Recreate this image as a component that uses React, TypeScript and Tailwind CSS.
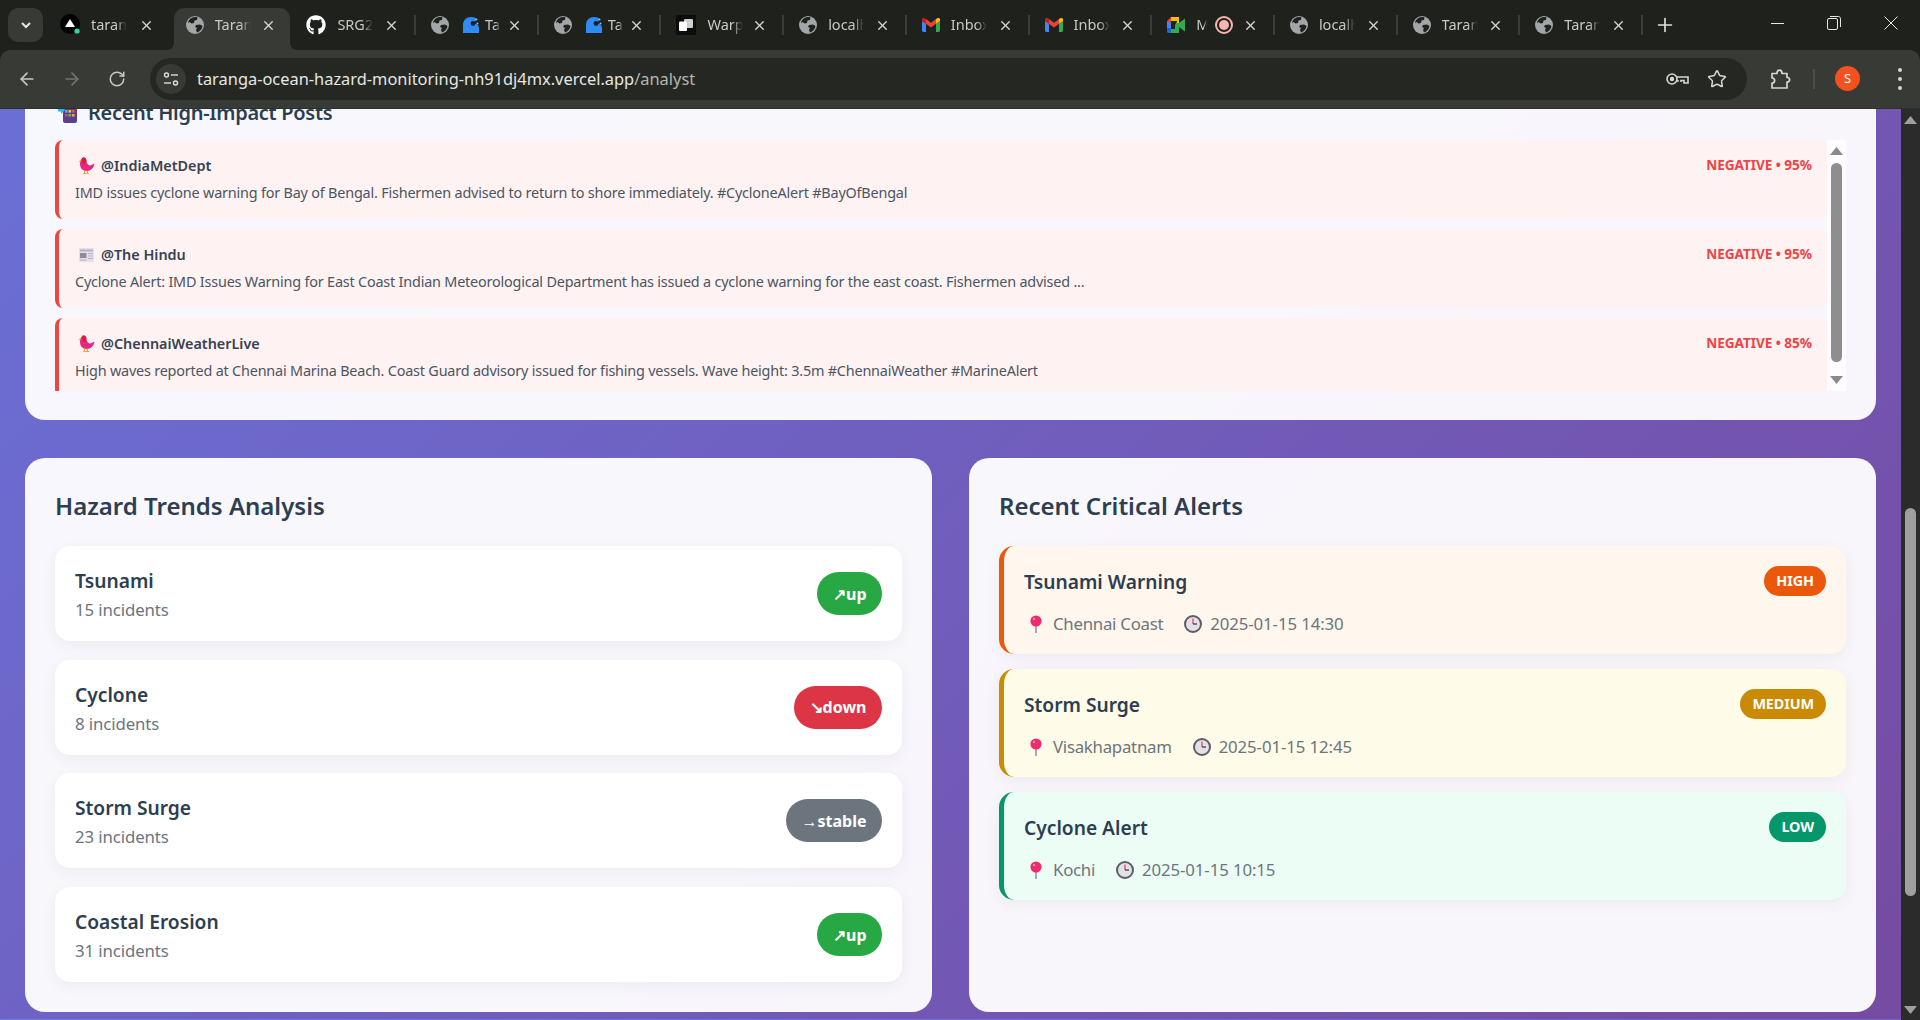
import React from "react";
import { ArrowLeft, ArrowRight, RotateCw, Star, X, Plus } from "lucide-react";
import { FaGithub } from "react-icons/fa";

const Globe = () => (
  <svg width="18" height="18" viewBox="0 0 18 18" className="shrink-0">
    <circle cx="9" cy="9" r="9" fill="#a3a6a8" />
    <path
      d="M5 2.2 C7 1 10 .8 11.5 1.5 L11 4 L8.5 4.5 L8 7 L5.5 7.5 L3.5 6 L2 7 C2.2 5 3.4 3.2 5 2.2Z M10 9 L14 8.5 L16.5 10 C16 13 14 15.5 11 16.5 L10 14 L11 12 L9 11Z"
      fill="#1e211c"
    />
  </svg>
);

const VercelIcon = () => (
  <svg width="20" height="22" viewBox="0 0 20 22" className="shrink-0">
    <circle cx="10" cy="10" r="10" fill="#000" />
    <path d="M10 5 L15 13 L5 13Z" fill="#fff" />
    <circle cx="17" cy="17" r="2.6" fill="#2dd4a8" />
  </svg>
);

const CatIcon = () => (
  <svg width="16" height="16" viewBox="0 0 16 16" className="shrink-0">
    <path d="M0 16 L0 8 C0 3 3.5 0 8 0 C10.5 0 12.5 .8 14 2 L11 6 L15 8 L16 11 V16Z" fill="#2f8bf5" />
    <circle cx="10" cy="6.5" r="2.4" fill="#13202c" />
    <circle cx="13.5" cy="2.5" r="1" fill="#7cc0ff" />
    <circle cx="14.5" cy="6.5" r="1" fill="#7cc0ff" />
  </svg>
);

const WarpIcon = () => (
  <span className="flex h-5 w-5 shrink-0 items-center justify-center bg-[#0c0c0c]">
    <svg width="14" height="12" viewBox="0 0 14 12">
      <rect x="5" y="0" width="9" height="9" rx="1" fill="#cfcfcf" />
      <rect x="0" y="2.5" width="8" height="9.5" rx="1" fill="#fff" />
    </svg>
  </span>
);

const GmailIcon = () => (
  <svg width="18" height="14" viewBox="0 0 18 14" className="shrink-0">
    <path d="M0 3 L0 12.6 C0 13.4 .6 14 1.4 14 L4 14 L4 5.5Z" fill="#4285f4" />
    <path d="M14 5.5 L14 14 L16.6 14 C17.4 14 18 13.4 18 12.6 L18 3Z" fill="#34a853" />
    <path d="M14 1 L14 5.8 L18 3 L18 1.6 C18 .2 16.4 -.6 15.3 .2Z" fill="#fbbc04" />
    <path d="M4 5.8 L4 1 L9 4.7 L14 1 L14 5.8 L9 9.5Z" fill="#ea4335" />
    <path d="M0 1.6 L0 3 L4 5.8 L4 1 L2.7 .2 C1.6 -.6 0 .2 0 1.6Z" fill="#c5221f" />
  </svg>
);

const MeetIcon = () => (
  <svg width="18" height="16" viewBox="0 0 18 16" className="shrink-0">
    <path d="M4 0 L12 0 L12 4 L4 4Z" fill="#fbbc04" />
    <path d="M0 4 L4 0 L4 5 L0 5Z" fill="#ea4335" />
    <path d="M0 5 L4 5 L4 11 L0 11Z" fill="#4285f4" />
    <path d="M0 11 L4 11 L4 16 L1.5 16 C.6 16 0 15.4 0 14.5Z" fill="#1967d2" />
    <path d="M4 12 L12 12 L12 16 L4 16Z" fill="#34a853" />
    <path d="M10 4 L12 4 L12 12 L8 12 L8 8Z" fill="#34a853" />
    <path d="M12 6 L18 1.5 L18 14.5 L12 10Z" fill="#34a853" />
    <path d="M10 0 L12 0 L12 6 L10 6Z" fill="#fbbc04" />
  </svg>
);

const RecIcon = () => (
  <span className="flex h-[18px] w-[18px] shrink-0 items-center justify-center rounded-full border-2 border-[#f7b5ad]">
    <span className="h-2.5 w-2.5 rounded-full bg-[#f7b5ad]" />
  </span>
);

type TabInfo = {
  icons: React.ReactNode[];
  title: string;
  titleWidth: number;
  active?: boolean;
  noSep?: boolean;
  narrow?: boolean;
  pad?: string;
};

const tabs: TabInfo[] = [
  { icons: [<VercelIcon key="a" />], title: "tarang", titleWidth: 36, noSep: true, pad: "pl-[12px]" },
  { icons: [<Globe key="a" />], title: "Tarang", titleWidth: 36, active: true, noSep: true },
  { icons: [<FaGithub key="a" size={20} color="#fff" className="shrink-0" />], title: "SRG2", titleWidth: 36, pad: "pl-[13px]" },
  { icons: [<Globe key="a" />, <CatIcon key="b" />], title: "Ta", titleWidth: 15, narrow: true },
  { icons: [<Globe key="a" />, <CatIcon key="b" />], title: "Ta", titleWidth: 15, narrow: true },
  { icons: [<WarpIcon key="a" />], title: "Warp", titleWidth: 36 },
  { icons: [<Globe key="a" />], title: "localh", titleWidth: 36 },
  { icons: [<GmailIcon key="a" />], title: "Inbox", titleWidth: 36 },
  { icons: [<GmailIcon key="a" />], title: "Inbox", titleWidth: 36 },
  { icons: [<MeetIcon key="a" />], title: "Me", titleWidth: 11 },
  { icons: [<Globe key="a" />], title: "localh", titleWidth: 36 },
  { icons: [<Globe key="a" />], title: "Tarang", titleWidth: 36 },
  { icons: [<Globe key="a" />], title: "Tarang", titleWidth: 36 },
];

const Tab = ({ tab, index }: { tab: TabInfo; index: number }) => (
  <div className={`relative flex h-[42px] w-[122.7px] shrink-0 items-center pb-[8px] ${tab.pad ?? "pl-[15px]"}`}>
    {tab.active && (
      <>
        <span className="absolute inset-x-[3px] inset-y-0 rounded-t-[10px] bg-[#383b35]" />
        <svg width="8" height="8" viewBox="0 0 8 8" className="absolute bottom-0 left-[-5px]">
          <path d="M0 8 C5 8 8 5 8 0 V8Z" fill="#383b35" />
        </svg>
        <svg width="8" height="8" viewBox="0 0 8 8" className="absolute bottom-0 right-[-5px]">
          <path d="M8 8 C3 8 0 5 0 0 V8Z" fill="#383b35" />
        </svg>
      </>
    )}
    <div className="relative flex items-center gap-[14px]">{tab.icons}</div>
    <span
      className={`relative overflow-hidden whitespace-nowrap text-[14.5px] text-[#c7c9c4] [mask-image:linear-gradient(to_right,black_70%,transparent)] ${
        tab.narrow ? "ml-[6px]" : "ml-[11px]"
      }`}
      style={{ width: tab.titleWidth }}
    >
      {tab.title}
    </span>
    {index === 9 && (
      <span className="ml-[8px]">
        <RecIcon />
      </span>
    )}
    <X size={15} strokeWidth={2.2} color="#d5d7d2" className="absolute right-[17px] top-[10px]" />
    {!tab.noSep && <span className="absolute right-0 top-[7px] h-[20px] w-[2px] bg-[#3a3d38]" />}
  </div>
);

const TabStrip = () => (
  <div className="flex h-[50px] shrink-0 items-end bg-[#1e211c]">
    <div className="mb-[8px] ml-[8px] mr-[5px] flex h-[34px] w-[35px] shrink-0 items-center justify-center rounded-[10px] bg-[#383b35]">
      <svg width="12" height="8" viewBox="0 0 12 8" fill="none" stroke="#e6e7e4" strokeWidth="2">
        <path d="M2 2 L6 6 L10 2" />
      </svg>
    </div>
    {tabs.map((t, i) => (
      <Tab key={i} tab={t} index={i} />
    ))}
    <div className="mb-[10px] ml-[15px] flex h-[30px] w-[14px] shrink-0 items-center justify-center">
      <Plus size={22} strokeWidth={1.8} color="#e0e2dd" className="shrink-0" />
    </div>
    <div className="ml-auto flex h-[50px] items-start">
      <div className="flex h-[46px] w-[56px] items-center justify-center">
        <span className="h-[1px] w-[13px] bg-[#e6e7e4]" />
      </div>
      <div className="flex h-[46px] w-[57px] items-center justify-center">
        <svg width="14" height="14" viewBox="0 0 14 14" fill="none" stroke="#e6e7e4" strokeWidth="1">
          <rect x=".5" y="2.5" width="10" height="11" rx="1.5" />
          <path d="M3 .5 H11.5 C12.6 .5 13.5 1.4 13.5 2.5 V11" />
        </svg>
      </div>
      <div className="flex h-[46px] w-[58px] items-center justify-center">
        <svg width="14" height="14" viewBox="0 0 14 14" fill="none" stroke="#e6e7e4" strokeWidth="1">
          <path d="M.5 .5 L13.5 13.5 M13.5 .5 L.5 13.5" />
        </svg>
      </div>
    </div>
  </div>
);

const Toolbar = () => (
  <div className="flex h-[59px] shrink-0 items-center rounded-t-[10px] border-b border-b-[#2e302c] bg-[#383b35] pb-[1px] pr-[18px]">
    <div className="flex w-[150px] shrink-0 items-center pl-[17px]">
      <ArrowLeft size={20} strokeWidth={2} color="#c7c9c4" />
      <ArrowRight size={20} strokeWidth={2} color="#72756f" className="ml-[25px]" />
      <RotateCw size={18} strokeWidth={2} color="#c7c9c4" className="ml-[26px]" />
    </div>
    <div className="flex h-[42px] w-[1597px] shrink-0 items-center rounded-full bg-[#252822] pl-[6px] pr-[20px]">
      <span className="flex h-[30px] w-[30px] shrink-0 items-center justify-center rounded-full bg-[#383b35]">
        <svg width="16" height="16" viewBox="0 0 16 16" fill="none" stroke="#dcdeda" strokeWidth="1.4">
          <circle cx="3.5" cy="4" r="2" />
          <path d="M8 4 H15" />
          <circle cx="12.5" cy="12" r="2" />
          <path d="M1 12 H8" />
        </svg>
      </span>
      <span className="ml-[11px] whitespace-nowrap pt-[2px] text-[16.4px] text-[#e6e7e4]">
        taranga-ocean-hazard-monitoring-nh91dj4mx.vercel.app
        <span className="text-[#b4b6b1]">/analyst</span>
      </span>
      <svg width="23" height="14" viewBox="0 0 23 14" fill="none" stroke="#d5d7d2" strokeWidth="1.6" className="ml-auto">
        <circle cx="6" cy="7" r="5" />
        <circle cx="6" cy="7" r="1.4" fill="#d5d7d2" />
        <path d="M11 5 H22 V11 H18 V8.5 H15 V10 M11 9 H13" />
      </svg>
      <Star size={20} strokeWidth={1.8} color="#d5d7d2" className="ml-[18px]" />
    </div>
    <svg width="22" height="22" viewBox="0 0 22 22" fill="none" stroke="#d5d7d2" strokeWidth="1.7" className="ml-[23px]">
      <path d="M2 5.5 H7 C7 1 12 1 12 5.5 H17 V9.5 C20.5 9.5 20.5 14 17 14 V20 H2 V15 C5.5 15 5.5 10 2 10Z" strokeLinejoin="round" />
    </svg>
    <span className="ml-[21px] h-[20px] w-[2px] bg-[#4d504a]" />
    <span className="ml-[20px] flex h-[25px] w-[25px] items-center justify-center rounded-full bg-[#f4511e] text-[13px] text-white">
      S
    </span>
    <span className="ml-auto flex flex-col gap-[5px]">
      <span className="h-[4px] w-[4px] rounded-full bg-[#d5d7d2]" />
      <span className="h-[4px] w-[4px] rounded-full bg-[#d5d7d2]" />
      <span className="h-[4px] w-[4px] rounded-full bg-[#d5d7d2]" />
    </span>
  </div>
);

const PhoneEmoji = () => (
  <svg width="20" height="20" viewBox="0 0 20 20" className="shrink-0">
    <rect x="5" y="0" width="14" height="20" rx="2" fill="#5c3d8f" />
    {[6.5, 10, 13.5].map((x, i) => (
      <g key={x}>
        <rect x={x + 0.5} y="3" width="2.6" height="2.6" fill={["#f6a23a", "#e8463f", "#39a7ee"][i]} />
        <rect x={x + 0.5} y="7" width="2.6" height="2.6" fill={["#35b6ee", "#f4c430", "#ea4e6a"][i]} />
        <rect x={x + 0.5} y="11" width="2.6" height="2.6" fill={["#e8463f", "#4cc36b", "#f6a23a"][i]} />
      </g>
    ))}
    <path d="M0 5.5 H3 V3 L7 7 L3 11 V8.5 H0Z" fill="#33b4f5" />
  </svg>
);

const BirdEmoji = () => (
  <svg width="17" height="17" viewBox="0 0 16 17" className="shrink-0">
    <path d="M4 .8 C6 0 7.6 1 7.8 3 C8 5.5 9 8 11 8.5 C12.5 8.7 14 7.5 16 6.5 C15.5 10.5 12.5 14 8 14 C4 14 1.5 11 1.5 7 C1.5 4.5 2.2 2 4 .8Z" fill="#e6287f" />
    <path d="M4 .8 C6 0 7.6 1 7.8 3 C8 5 7 6.5 5 7 C3.5 5 3 3 4 .8Z" fill="#e4173f" />
    <path d="M2.2 3 L0 4.4 L2 5Z" fill="#f5a623" />
    <path d="M6 14 V16.5 M9 14 V16.5 M4.5 16.6 H10.5" stroke="#f5a623" strokeWidth="1" />
  </svg>
);

const NewsEmoji = () => (
  <svg width="15" height="14" viewBox="0 0 15 14" className="mx-[1px] shrink-0">
    <rect width="15" height="14" rx="1" fill="#e5e0ec" />
    <rect x="1" y="1.5" width="13" height="2" fill="#b6b0bf" />
    <rect x="1" y="5" width="6.5" height="5" fill="#8f8a97" />
    <path d="M9 5.5 H14 M9 8 H14 M9 10.5 H14 M1 12 H7.5" stroke="#b6b0bf" strokeWidth="1" />
  </svg>
);

const PinEmoji = () => (
  <svg width="14" height="18" viewBox="0 0 14 18" className="shrink-0">
    <rect x="6" y="9" width="2" height="9" fill="#a9a7b3" />
    <circle cx="7" cy="6" r="5.6" fill="#ef2a6f" />
    <circle cx="5" cy="4" r="1.2" fill="#ff8fb0" />
  </svg>
);

const ClockEmoji = () => (
  <svg width="18" height="18" viewBox="0 0 18 18" className="shrink-0">
    <circle cx="9" cy="9" r="8" fill="#e4e1e6" stroke="#5d5c66" strokeWidth="2" />
    <path d="M9 3.5 V9" stroke="#d9366a" strokeWidth="1.2" />
    <path d="M9 9 H13" stroke="#4a4953" strokeWidth="1.4" />
  </svg>
);

const posts = [
  {
    icon: <BirdEmoji />,
    user: "@IndiaMetDept",
    score: "NEGATIVE • 95%",
    text: "IMD issues cyclone warning for Bay of Bengal. Fishermen advised to return to shore immediately. #CycloneAlert #BayOfBengal",
  },
  {
    icon: <NewsEmoji />,
    user: "@The Hindu",
    score: "NEGATIVE • 95%",
    text: "Cyclone Alert: IMD Issues Warning for East Coast Indian Meteorological Department has issued a cyclone warning for the east coast. Fishermen advised ...",
  },
  {
    icon: <BirdEmoji />,
    user: "@ChennaiWeatherLive",
    score: "NEGATIVE • 85%",
    text: "High waves reported at Chennai Marina Beach. Coast Guard advisory issued for fishing vessels. Wave height: 3.5m #ChennaiWeather #MarineAlert",
  },
];

const trends = [
  { name: "Tsunami", count: "15 incidents", label: "↗up", badge: "bg-[#28a745]" },
  { name: "Cyclone", count: "8 incidents", label: "↘down", badge: "bg-[#dc3545]" },
  { name: "Storm Surge", count: "23 incidents", label: "→stable", badge: "bg-[#6c757d]" },
  { name: "Coastal Erosion", count: "31 incidents", label: "↗up", badge: "bg-[#28a745]" },
];

const alerts = [
  {
    title: "Tsunami Warning",
    place: "Chennai Coast",
    time: "2025-01-15 14:30",
    level: "HIGH",
    box: "border-l-[#ea580c] bg-[#fff7ed]",
    badge: "bg-[#ea580c]",
  },
  {
    title: "Storm Surge",
    place: "Visakhapatnam",
    time: "2025-01-15 12:45",
    level: "MEDIUM",
    box: "border-l-[#ca8a04] bg-[#fefce8]",
    badge: "bg-[#ca8a04]",
  },
  {
    title: "Cyclone Alert",
    place: "Kochi",
    time: "2025-01-15 10:15",
    level: "LOW",
    box: "border-l-[#059669] bg-[#ecfdf5]",
    badge: "bg-[#059669]",
  },
];

const Triangle = ({ down, color }: { down?: boolean; color: string }) => (
  <svg width="13" height="8" viewBox="0 0 13 8" className="shrink-0">
    <path d={down ? "M0 0 H13 L6.5 8Z" : "M0 8 H13 L6.5 0Z"} fill={color} />
  </svg>
);

const App = () => {
  return (
    <div className="flex h-screen flex-col overflow-hidden bg-[#1e211c] font-['Noto_Sans',sans-serif]">
      <TabStrip />
      <Toolbar />
      <div className="flex min-h-0 flex-1">
        <div className="min-w-0 flex-1 overflow-hidden bg-[linear-gradient(135deg,#667eea,#764ba2)] bg-[length:1901px_2060px] bg-[position:0_-1150px] px-[25px]">
          {/* posts panel, scrolled partly out of view */}
          <div className="h-[311px] overflow-hidden rounded-b-[20px] bg-white/95 px-[30px]">
            <div className="-mt-[12px] mb-[11px] flex h-[32px] items-center gap-[10px] pl-[3px]">
              <PhoneEmoji />
              <h3 className="text-[20px] font-semibold tracking-[-0.3px] text-[#2c3e50]">Recent High-Impact Posts</h3>
            </div>
            <div className="flex h-[251px]">
              <div className="flex min-w-0 flex-1 flex-col gap-[10px] overflow-hidden">
                {posts.map((p) => (
                  <div key={p.user} className="h-[79px] shrink-0 rounded-[8px] border-l-[4px] border-l-[#ef4444] bg-[#fef2f2] pl-[16px] pr-[15px] pt-[15px]">
                    <div className="flex items-center justify-between">
                      <div className="flex h-[21px] items-center gap-[6px] pl-[3px]">
                        {p.icon}
                        <span className="text-[14.4px] font-semibold text-[#374151]">{p.user}</span>
                      </div>
                      <span className="text-[13.6px] font-bold tracking-[-0.05px] text-[#ef4444]">{p.score}</span>
                    </div>
                    <p className="mt-[7px] whitespace-nowrap text-[14.4px] leading-[20px] tracking-[-0.19px] text-[#4b5563]">{p.text}</p>
                  </div>
                ))}
              </div>
              <div className="flex w-[19px] shrink-0 flex-col items-center bg-white/70 pt-[7px]">
                <Triangle color="#8a8a8a" />
                <div className="mt-[8px] h-[199px] w-[11px] rounded-full bg-[#8e8e8e]" />
                <div className="mt-[14px]">
                  <Triangle down color="#8a8a8a" />
                </div>
              </div>
            </div>
          </div>

          <div className="mt-[38px] grid grid-cols-2 gap-[37px]">
            <div className="h-[554px] rounded-[20px] bg-white/95 p-[30px]">
              <h2 className="mb-[22px] h-[36px] text-[24px] font-semibold leading-[36px] text-[#2c3e50]">Hazard Trends Analysis</h2>
              <div className="flex flex-col gap-[18.7px]">
                {trends.map((t) => (
                  <div key={t.name} className="flex h-[95px] items-center justify-between rounded-[15px] bg-white px-[20px] shadow-[0_4px_15px_rgba(0,0,0,0.05)]">
                    <div className="mt-[2px]">
                      <div className="text-[19.2px] font-semibold leading-[28px] text-[#2c3e50]">{t.name}</div>
                      <div className="mt-[3px] text-[16.8px] leading-[24px] tracking-[-0.1px] text-[#6c757d]">{t.count}</div>
                    </div>
                    <span className={`flex h-[43px] items-center rounded-full px-[15.5px] text-[16px] font-bold text-white ${t.badge}`}>{t.label}</span>
                  </div>
                ))}
              </div>
            </div>

            <div className="h-[554px] rounded-[20px] bg-white/95 p-[30px]">
              <h2 className="mb-[22px] h-[36px] text-[24px] font-semibold leading-[36px] text-[#2c3e50]">Recent Critical Alerts</h2>
              <div className="flex flex-col gap-[15px]">
                {alerts.map((a) => (
                  <div key={a.title} className={`h-[108px] rounded-[15px] border-l-[5px] pl-[20px] pr-[20px] pt-[20px] shadow-[0_4px_15px_rgba(0,0,0,0.05)] ${a.box}`}>
                    <div className="flex h-[30px] items-center justify-between">
                      <span className="pt-[2px] text-[19.2px] font-semibold text-[#2c3e50]">{a.title}</span>
                      <span className={`flex h-[30px] items-center rounded-full px-[12px] text-[14.4px] font-bold tracking-[-0.1px] text-white ${a.badge}`}>{a.level}</span>
                    </div>
                    <div className="mt-[16px] flex h-[24px] items-center text-[16.8px] text-[#6c757d]">
                      <span className="ml-[5px] mr-[10px]">
                        <PinEmoji />
                      </span>
                      <span className="tracking-[-0.25px]">{a.place}</span>
                      <span className="ml-[21px] mr-[8px]">
                        <ClockEmoji />
                      </span>
                      <span className="tracking-[-0.1px]">{a.time}</span>
                    </div>
                  </div>
                ))}
              </div>
            </div>
          </div>
        </div>

        {/* page scrollbar */}
        <div className="flex w-[19px] shrink-0 flex-col items-center bg-[#2b2b2b] pb-[6px] pt-[7px]">
          <Triangle color="#9f9f9f" />
          <div className="mt-[384px] h-[388px] w-[11px] rounded-full bg-[#9f9f9f]" />
          <div className="mt-auto">
            <Triangle down color="#9f9f9f" />
          </div>
        </div>
      </div>
    </div>
  );
};

export default App;
